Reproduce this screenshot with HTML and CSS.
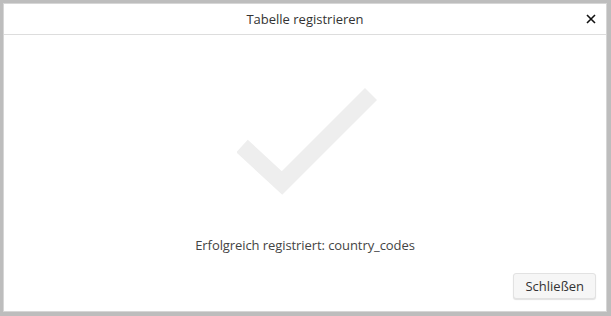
FILE: index.html
```html
<!DOCTYPE html>
<html lang="de">
<head>
<meta charset="utf-8">
<link rel="stylesheet" href="styles.css">
</head>
<body>
<div class="dialog">
  <div class="header">
    <span class="title">Tabelle registrieren</span>
    <button class="close" aria-label="Schließen">
      <svg width="10" height="10" viewBox="0 0 10 10"><path d="M1 1L9 9M9 1L1 9" stroke="#111" stroke-width="1.6" fill="none"/></svg>
    </button>
  </div>
  <div class="body">
    <svg class="check" width="150" height="112" viewBox="0 0 150 112">
      <path d="M5 58L45 95L134 6" stroke="#eeeeee" stroke-width="17" fill="none"/>
    </svg>
    <div class="message">Erfolgreich registriert: country_codes</div>
  </div>
  <div class="footer">
    <button class="btn">Schließen</button>
  </div>
</div>
</body>
</html>
```
FILE: styles.css
```css
html, body {
  margin: 0;
  padding: 0;
  height: 100%;
}
body {
  background: #bdbdbd;
  padding: 4px 5px 5px 4px;
  box-sizing: border-box;
  font-family: "Open Sans", sans-serif;
}
.dialog {
  background: #fff;
  height: 100%;
  display: flex;
  flex-direction: column;
  box-shadow: 0 0 0 1px #d6d6d6;
}
.header {
  height: 30px;
  border-bottom: 1px solid #dddddd;
  display: flex;
  align-items: center;
  justify-content: center;
  position: relative;
}
.title {
  font-size: 13px;
  color: #333;
}
.close {
  position: absolute;
  right: 10px;
  top: 10px;
  border: 0;
  background: none;
  padding: 0;
  width: 10px;
  height: 10px;
  display: flex;
}
.body {
  flex: 1;
  display: flex;
  flex-direction: column;
  align-items: center;
}
.check {
  margin-top: 53px;
  margin-left: 14px;
}
.message {
  margin-top: 36px;
  font-size: 13px;
  color: #444;
  letter-spacing: -0.08px;
}
.footer {
  display: flex;
  justify-content: flex-end;
  padding: 0 10px 12px 0;
}
.btn {
  font-family: "Open Sans", sans-serif;
  font-size: 13px;
  color: #333;
  background: #f6f6f6;
  border: 1px solid #e2e2e2;
  border-radius: 3px;
  box-shadow: 0 1px 1px rgba(0,0,0,0.12);
  height: 26px;
  padding: 0 11px;
}
```
